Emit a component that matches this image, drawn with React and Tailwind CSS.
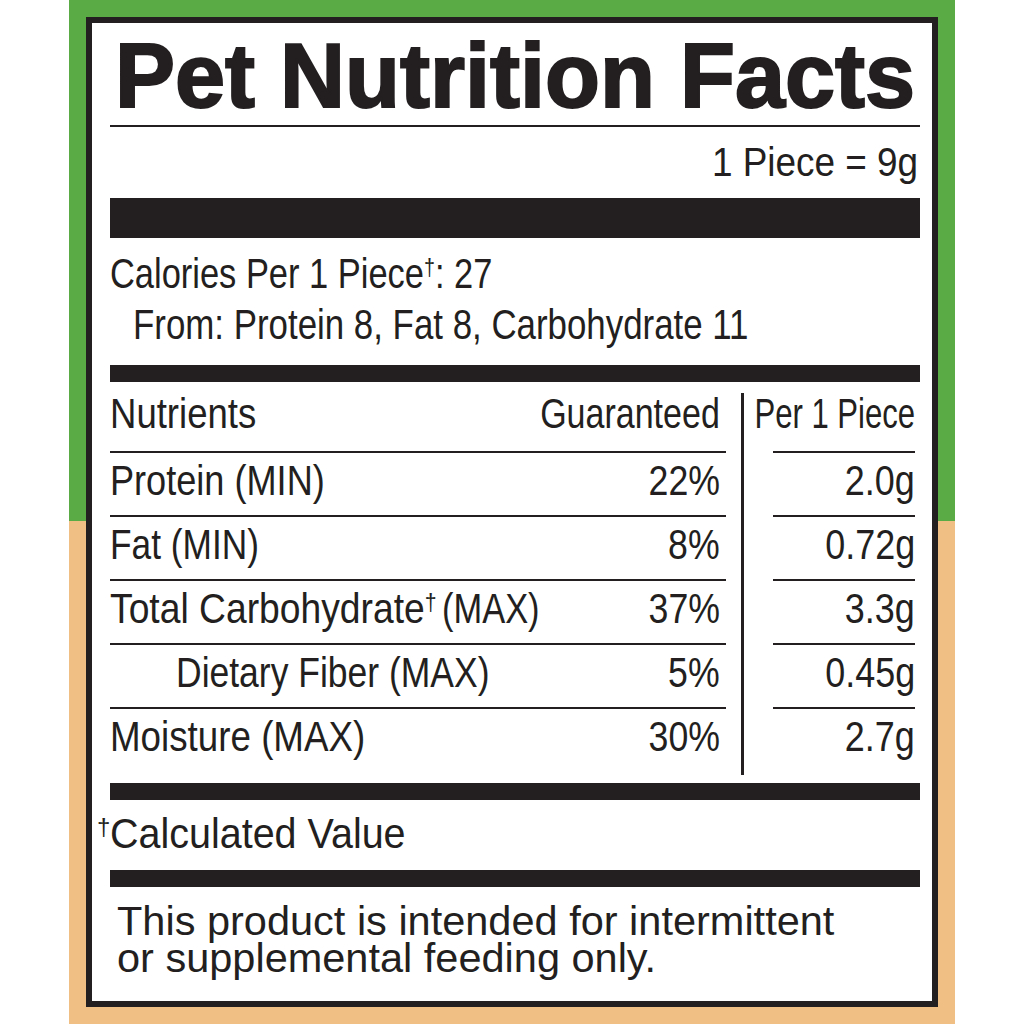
import React from 'react';

// Liberation Sans squeezed to stand in for a condensed face
const T = ({ s = 'scale-x-[0.82]', right, className = '', children }) => (
    <span className={`inline-block whitespace-nowrap ${right ? 'origin-right' : 'origin-left'} ${s} ${className}`}>
        {children}
    </span>
);

const Dagger = () => (
    <sup className="text-[24px] top-[-0.55em]">†</sup>
);

const rows = [
    { label: 'Protein (MIN)', ls: 'scale-x-[0.86]', pct: '22%', amount: '2.0g' },
    { label: 'Fat (MIN)', ls: 'scale-x-[0.84]', pct: '8%', amount: '0.72g' },
    { label: 'Total Carbohydrate', carb: true, pct: '37%', amount: '3.3g' },
    { label: 'Dietary Fiber (MAX)', ls: 'scale-x-[0.845]', indent: true, pct: '5%', amount: '0.45g' },
    { label: 'Moisture (MAX)', ls: 'scale-x-[0.875]', pct: '30%', amount: '2.7g' },
];

const App = () => {
    return (
        <div className="w-[1024px] h-[1024px] bg-white flex text-[#231f20] font-['Liberation_Sans',Arial,sans-serif]">
            <div className="ml-[69px] w-[886px] h-[1024px] p-[17px] bg-[linear-gradient(to_bottom,#5aab46_521px,#efbf84_521px)]">
                <div className="h-[990px] border-[6px] border-[#231f20] bg-white pl-[18px] pr-[12px] flex flex-col">
                    {/* Title */}
                    <h1 className="pt-[4px] h-[102px] leading-[98px] text-center text-[90px] font-bold [-webkit-text-stroke:2px_#231f20] whitespace-nowrap">
                        Pet Nutrition Facts
                    </h1>
                    <div className="h-[2px] bg-[#231f20]" />
                    <div className="h-[71px] leading-[71px] text-[41px] flex justify-end pr-[2px]">
                        <T right s="scale-x-[0.9]">1 Piece = 9g</T>
                    </div>
                    <div className="h-[40px] bg-[#231f20]" />

                    {/* Calories */}
                    <div className="pt-[10px] pb-[15px] text-[42px] leading-[51px]">
                        <div><T s="scale-x-[0.82]">Calories Per 1 Piece<Dagger />: 27</T></div>
                        <div className="pl-[23px]"><T s="scale-x-[0.83]">From: Protein 8, Fat 8, Carbohydrate 11</T></div>
                    </div>
                    <div className="h-[17px] bg-[#231f20]" />

                    {/* Table */}
                    <div className="flex text-[42px]">
                        <div className="w-[616px]">
                            <div className="h-[71px] border-b-2 border-[#231f20] flex justify-between pr-[6px] leading-[63px]">
                                <T s="scale-x-[0.87]">Nutrients</T>
                                <T right s="scale-x-[0.81]">Guaranteed</T>
                            </div>
                            {rows.map((r, i) => (
                                <div
                                    key={r.label}
                                    className={`${i === rows.length - 1 ? 'h-[74px]' : 'h-[64px] border-b-2 border-[#231f20]'} flex justify-between pr-[6px] pt-[3px] leading-[49px]`}
                                >
                                    {r.carb ? (
                                        <span className="flex">
                                            <span className="w-[332px]">
                                                <T s="scale-x-[0.887]">{r.label}<Dagger /></T>
                                            </span>
                                            <T s="scale-x-[0.82]">(MAX)</T>
                                        </span>
                                    ) : (
                                        <span className={r.indent ? 'pl-[66px]' : ''}>
                                            <T s={r.ls}>{r.label}</T>
                                        </span>
                                    )}
                                    <T right s="scale-x-[0.85]">{r.pct}</T>
                                </div>
                            ))}
                        </div>
                        <div className="w-[47px] pt-[11px] pb-[8px]">
                            <div className="ml-[15px] w-[3px] h-full bg-[#231f20]" />
                        </div>
                        <div className="w-[142px]">
                            <div className="h-[71px] border-b-2 border-[#231f20] flex justify-end leading-[63px]">
                                <T right s="scale-x-[0.74]">Per 1 Piece</T>
                            </div>
                            {rows.map((r, i) => (
                                <div
                                    key={r.label}
                                    className={`${i === rows.length - 1 ? 'h-[74px]' : 'h-[64px] border-b-2 border-[#231f20]'} flex justify-end pt-[3px] leading-[49px]`}
                                >
                                    <T right s="scale-x-[0.855]">{r.amount}</T>
                                </div>
                            ))}
                        </div>
                    </div>
                    <div className="h-[17px] bg-[#231f20]" />

                    {/* Footnote */}
                    <div className="h-[70px] leading-[67px] text-[42px] flex">
                        <span className="-ml-[13px] w-[13px]"><Dagger /></span>
                        <T s="scale-x-[0.94]">Calculated Value</T>
                    </div>
                    <div className="h-[17px] bg-[#231f20]" />

                    <div className="pt-[15px] pl-[7px] text-[41.5px] leading-[37px] whitespace-nowrap">
                        <div>This product is intended for intermittent</div>
                        <div>or supplemental feeding only.</div>
                    </div>
                </div>
            </div>
        </div>
    );
};

export default App;
